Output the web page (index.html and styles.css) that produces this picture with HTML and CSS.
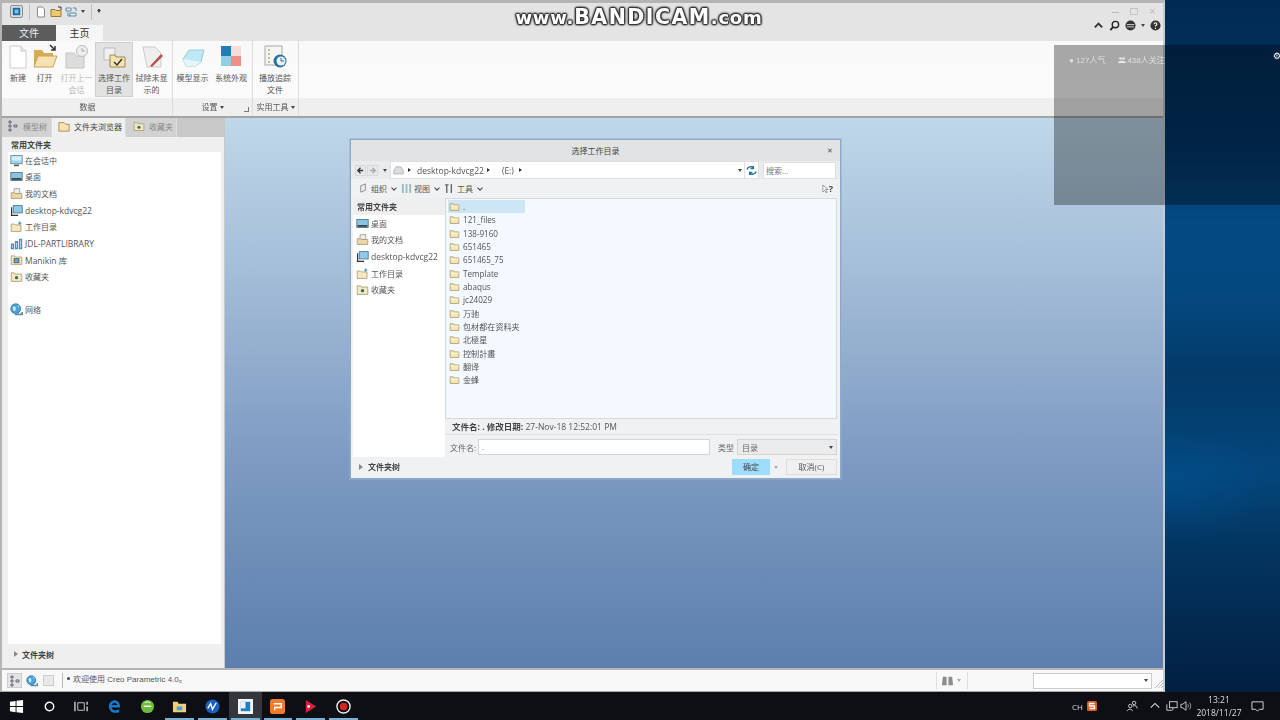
FILE: index.html
```html
<!DOCTYPE html>
<html lang="zh">
<head>
<meta charset="utf-8">
<title>Creo Parametric</title>
<link rel="stylesheet" href="styles.css">
</head>
<body>
<svg class="defs" width="0" height="0" aria-hidden="true">
  <symbol id="folder" viewBox="0 0 14 14"><path d="M1.500 3.500h4l1 1.500h6v7h-11z" fill="#f6e7b8" stroke="#a8966a"/><path d="M2 6.500h10.500" stroke="#fff6d8"/></symbol>
  <symbol id="monitor" viewBox="0 0 16 16"><rect x="1" y="2" width="14" height="10" fill="#a5d8ee" stroke="#5d8296"/><rect x="2" y="3" width="12" height="5" fill="#d2eef8"/><path d="M5 14h6" stroke="#555" stroke-width="2"/></symbol>
  <symbol id="desk" viewBox="0 0 16 16"><rect x="1" y="3" width="14" height="10" fill="#87c5e2" stroke="#4b6e84"/><rect x="2" y="10" width="12" height="2" fill="#333"/></symbol>
  <symbol id="docs" viewBox="0 0 16 16"><path d="M5 2h7v6H5z" fill="#eee" stroke="#999"/><path d="M1.500 7h4l1 1h8v6h-13z" fill="#ecd7a6" stroke="#a8966a"/></symbol>
  <symbol id="netpc" viewBox="0 0 16 16"><rect x="4" y="2" width="11" height="9" fill="#8ecbe8" stroke="#4b6e84"/><path d="M2 4v10M1 14h9" stroke="#333" stroke-width="1.500"/></symbol>
  <symbol id="work" viewBox="0 0 16 16"><path d="M1.500 5h4l1 1h7v8h-12z" fill="#f6e8c2" stroke="#a8966a"/><path d="M12 1l.8 2 2 .8-2 .8-.8 2-.8-2-2-.8 2-.8z" fill="#3d8ec0"/></symbol>
  <symbol id="lib" viewBox="0 0 16 16"><path d="M1 8h4v7H1zM6 5h4v10H6zM11 2h4v13h-4z" fill="#3f93c6"/><path d="M3 10v3M8 7v6M13 4v9" stroke="#cfe8f5"/></symbol>
  <symbol id="manikin" viewBox="0 0 16 16"><path d="M1.500 3.500h4l1 1.500h8v9h-13z" fill="#f6e8c2" stroke="#a8966a"/><rect x="5" y="7" width="6" height="5" fill="#6fa3c0" stroke="#2f5f7c"/></symbol>
  <symbol id="fav" viewBox="0 0 16 16"><path d="M1.500 3.500h4l1 1.500h8v9h-13z" fill="#f6e8c2" stroke="#a8966a"/><circle cx="8" cy="9.500" r="2" fill="#2f6d5f"/></symbol>
  <symbol id="globe" viewBox="0 0 16 16"><circle cx="7" cy="7" r="6" fill="#4ba3d8" stroke="#2a6f9f"/><path d="M3 5c3-2 5 0 4 3s-3 2-3 0M9 2c2 1 3 3 2 4" fill="#c9ecf7"/><path d="M6 14h9v-3" fill="none" stroke="#5b8cad" stroke-width="2"/></symbol>
</svg>

<div class="desktop">
  <div class="screen">
    <div class="app">
      <header class="titlebar">
        <div class="quick">
          <svg class="q-app" viewBox="0 0 14 14"><rect x=".5" y=".5" width="13" height="13" rx="2" fill="#d8dde0" stroke="#7a8188"/><rect x="3" y="3" width="8" height="8" fill="#1f6aa0"/><rect x="5" y="5" width="4" height="4" fill="#7ec4e8"/></svg>
          <span class="q-sep"></span>
          <svg class="q-ic" viewBox="0 0 12 12"><path d="M2.500 1h5l2 2v8h-7z" fill="#fff" stroke="#8a8a8a"/></svg>
          <svg class="q-ic" viewBox="0 0 12 12"><path d="M1 3.500h4l1 1h5v6H1z" fill="#ecc873" stroke="#9a7b35"/><path d="M8 1h3v3" fill="none" stroke="#333"/></svg>
          <svg class="q-ic" viewBox="0 0 12 12"><path d="M1 2h5v3H1zM5 7h6v3H5z" fill="#dfeef6" stroke="#5d8aa6"/><path d="M8 2h3v3M3 6v4h2" fill="none" stroke="#5d8aa6"/></svg>
          <span class="caret q-caret"></span>
          <span class="q-sep"></span>
          <span class="caret bar"></span>
        </div>
        <div class="win-controls">
          <div class="caption">
            <span class="cap-min"></span><span class="cap-max"></span><span class="cap-close">✕</span>
          </div>
          <div class="help-row">
            <svg class="h-ic" viewBox="0 0 12 12"><path d="M2 8l4-4 4 4" fill="none" stroke="#333" stroke-width="2"/></svg>
            <svg class="h-ic" viewBox="0 0 12 12"><circle cx="7" cy="5" r="3.500" fill="none" stroke="#222" stroke-width="1.500"/><path d="M4.500 7.500L1.500 11" stroke="#222" stroke-width="2"/></svg>
            <svg class="h-ic" viewBox="0 0 12 12"><circle cx="6" cy="6" r="5.500" fill="#333"/><path d="M2 5h8M2 7.500h8" stroke="#ddd"/></svg>
            <span class="caret"></span>
            <svg class="h-ic" viewBox="0 0 12 12"><circle cx="6" cy="6" r="5.500" fill="#333"/><path d="M4.500 4.500c0-2 3-2 3 0 0 1.300-1.500 1.200-1.500 2.700M6 8.500v1.200" fill="none" stroke="#fff" stroke-width="1.200"/></svg>
          </div>
        </div>
      </header>
      <nav class="tabs">
        <span class="tab-file">文件</span>
        <span class="tab-home">主页</span>
      </nav>
      <section class="ribbon">
        <div class="group g-data">
          <div class="tools">
            <div class="tool w28"><svg class="big" viewBox="0 0 26 26"><path d="M5 2h11l5 5v17H5z" fill="#fff" stroke="#c8ccd0"/><path d="M16 2v5h5" fill="#e4e8ea" stroke="#c8ccd0"/></svg><span>新建</span></div>
            <div class="tool w27"><svg class="big" viewBox="0 0 26 26"><path d="M2 6h8l2 3h9v4H6l-4 10z" fill="#d9ab55"/><path d="M6 12h19l-4 11H2z" fill="#f6e2b0" stroke="#caa35a"/><path d="M18 1l5 5M23 2v4h-4" fill="none" stroke="#333" stroke-width="1.500"/></svg><span>打开</span></div>
            <div class="tool w37 off"><svg class="big" viewBox="0 0 26 26"><path d="M2 9h8l2 3h8v12H2z" fill="#dcdcdc" stroke="#c4c4c4"/><circle cx="18" cy="7" r="5.500" fill="#eee" stroke="#bbb"/><path d="M18 4v3h3" fill="none" stroke="#aaa"/></svg><span>打开上一会话</span></div>
            <div class="tool w38 active"><svg class="big" viewBox="0 0 26 26"><path d="M3 4h11v12H3z" fill="#f0f0f0" stroke="#bbb"/><path d="M9 11h5l1 2h9v10H9z" fill="#f6e2b0" stroke="#a08850"/><path d="M13 18l3 3 5-6" fill="none" stroke="#333" stroke-width="1.500"/></svg><span>选择工作目录</span></div>
            <div class="tool w37"><svg class="big" viewBox="0 0 26 26"><path d="M4 3h12l6 6v14H8z" fill="#eee" stroke="#ccc"/><path d="M11 22l11-12 2 2-11 11z" fill="#b8524e"/></svg><span>拭除未显示的</span></div>
          </div>
          <div class="group-foot">数据</div>
        </div>
        <div class="group g-set">
          <div class="tools">
            <div class="tool w39"><svg class="big" viewBox="0 0 26 26"><path d="M3 15l6-9h15l-3 12-5 4H6z" fill="#bfe8f6" stroke="#9cc"/><path d="M3 15l3 7h10l5-4-5-1z" fill="#e4f6fb"/></svg><span>模型显示</span></div>
            <div class="tool w38"><svg class="big" viewBox="0 0 26 26"><rect x="3" y="2" width="10" height="10" fill="#1c7fb5"/><rect x="13" y="2" width="10" height="10" fill="#f8dcdc"/><rect x="3" y="12" width="10" height="10" fill="#8fd0e2"/><rect x="13" y="12" width="10" height="10" fill="#ec8f84"/></svg><span>系统外观</span></div>
          </div>
          <div class="group-foot">设置 <span class="caret"></span><span class="launcher"></span></div>
        </div>
        <div class="group g-util">
          <div class="tools">
            <div class="tool w44"><svg class="big" viewBox="0 0 26 26"><rect x="3" y="2" width="17" height="19" fill="#f4f4f0" stroke="#aaa"/><path d="M6 6h2M6 10h2M6 14h2M6 18h2" stroke="#8a8a50"/><circle cx="18" cy="17" r="6.500" fill="#2c6e9e"/><circle cx="19" cy="17" r="4.500" fill="#e9f2f7"/><path d="M19 14v3h3" fill="none" stroke="#2c6e9e"/></svg><span>播放追踪文件</span></div>
          </div>
          <div class="group-foot">实用工具 <span class="caret"></span></div>
        </div>
      </section>
      <main class="workspace">
        <aside class="nav">
          <div class="nav-tabs">
            <span class="nav-tab t-model"><svg class="ni" viewBox="0 0 12 12"><path d="M2 1h2v2H2zM2 5h2v2H2zM2 9h2v2H2zM7 5h3v2H7z" fill="none" stroke="#667"/></svg>模型树</span>
            <span class="nav-tab t-browser on"><svg class="ni" viewBox="0 0 14 14"><path d="M1 3h6l2 2h4v8H1z" fill="#f6e2b0" stroke="#a08850"/></svg>文件夹浏览器</span>
            <span class="nav-tab t-fav"><svg class="ni"><use href="#fav"/></svg>收藏夹</span>
          </div>
          <div class="nav-body">
            <div class="sec-head">常用文件夹</div>
            <ul class="places">
              <li><svg class="pi"><use href="#monitor"/></svg>在会话中</li>
              <li><svg class="pi"><use href="#desk"/></svg>桌面</li>
              <li><svg class="pi"><use href="#docs"/></svg>我的文档</li>
              <li class="latin"><svg class="pi"><use href="#netpc"/></svg>desktop-kdvcg22</li>
              <li><svg class="pi"><use href="#work"/></svg>工作目录</li>
              <li class="latin"><svg class="pi"><use href="#lib"/></svg>JDL-PARTLIBRARY</li>
              <li class="latin"><svg class="pi"><use href="#manikin"/></svg>Manikin 库</li>
              <li><svg class="pi"><use href="#fav"/></svg>收藏夹</li>
              <li class="spacer"></li>
              <li><svg class="pi"><use href="#globe"/></svg>网络</li>
            </ul>
            <div class="tree-foot"><span class="tri"></span>文件夹树</div>
          </div>
        </aside>
        <div class="graphics"></div>
      </main>
      <footer class="status">
        <div class="st-left">
          <span class="st-btn pressed"><svg viewBox="0 0 12 12"><path d="M2 1h2v2H2zM2 5h2v2H2zM2 9h2v2H2zM7 5h3v2H7z" fill="none" stroke="#667"/></svg></span>
          <span class="st-btn"><svg viewBox="0 0 14 14"><use href="#globe"/></svg></span>
          <span class="st-btn"><span class="st-box"></span></span>
          <span class="st-sep"></span>
          <span class="st-msg"><span class="dot"></span>欢迎使用 Creo Parametric 4.0。</span>
        </div>
        <div class="st-right">
          <span class="finder"><svg viewBox="0 0 14 14"><path d="M2 3h4v9H1zM8 3h4l1 9H8z" fill="#8c8c8c"/></svg><i class="caret"></i></span>
          <span class="filter"><i class="caret"></i></span>
          <svg class="grip" viewBox="0 0 8 8"><path d="M8 0L0 8M8 3L3 8M8 6L6 8" stroke="#bbb"/></svg>
        </div>
      </footer>
    </div>
    <div class="wallpaper"></div>
  </div>

  <div class="taskbar">
    <div class="task-left">
      <span class="tb"><svg viewBox="0 0 16 16"><path d="M1 3l6-1v5.500H1zM8 1.800L15 1v6.500H8zM1 8.500h6V14l-6-1zM8 8.500h7V15l-7-1z" fill="#fff"/></svg></span>
      <span class="tb"><svg viewBox="0 0 16 16"><circle cx="8" cy="8" r="4.500" fill="none" stroke="#fff" stroke-width="1.500"/></svg></span>
      <span class="tb"><svg viewBox="0 0 16 16"><path d="M4 4h7v8H4z" fill="none" stroke="#ccc"/><path d="M1 3v10M14 3v3M14 8v5" stroke="#ccc" stroke-width="1.500"/></svg></span>
      <span class="tb"><svg viewBox="0 0 16 16"><path d="M14 9H5c.2 3 4.500 4 8 2v3c-5 2-11 0-11-6 0-6 6-8 9-6 2 1 3 4 3 7zM5 6.500h6c0-3-5.500-3-6 0z" fill="#1679c9"/></svg></span>
      <span class="tb"><svg viewBox="0 0 16 16"><circle cx="8" cy="8" r="7" fill="#6cbb3c"/><path d="M4 7h8v1.500H4z" fill="#fff"/><path d="M5 4a5 5 0 016 0" fill="none" stroke="#fff"/></svg></span>
      <span class="tb run"><svg viewBox="0 0 16 16"><path d="M1 3h5l1 2h8v9H1z" fill="#f0cf78"/><rect x="5" y="8" width="6" height="4" fill="#4aa3cf"/></svg></span>
      <span class="tb run"><svg viewBox="0 0 16 16"><circle cx="8" cy="8" r="7.500" fill="#1b5fc0"/><path d="M3 10l3-5 2 6 4-7" fill="none" stroke="#fff" stroke-width="1.500"/></svg></span>
      <span class="tb run active"><svg viewBox="0 0 16 16"><rect x="0" y="0" width="16" height="16" fill="#f4f4f4"/><rect x="3" y="3" width="10" height="10" fill="#1f7fc0"/><rect x="3" y="3" width="5" height="7" fill="#e8f2f8"/></svg></span>
      <span class="tb run"><svg viewBox="0 0 16 16"><rect width="16" height="16" rx="3" fill="#ee7c2c"/><path d="M4 5h8v4H5v3" fill="none" stroke="#fff" stroke-width="1.500"/></svg></span>
      <span class="tb run"><svg viewBox="0 0 16 16"><path d="M3 1l11 7-11 7z" fill="#d9203f"/><circle cx="6" cy="8" r="1.500" fill="#fff"/></svg></span>
      <span class="tb run"><svg viewBox="0 0 16 16"><circle cx="8" cy="8" r="7" fill="none" stroke="#eee" stroke-width="1.500"/><circle cx="8" cy="8" r="4" fill="#e02020"/></svg></span>
    </div>
    <div class="tray">
      <span class="t-ch">CH</span>
      <svg class="t-s" viewBox="0 0 12 12"><rect x="1" y="1" width="10" height="10" rx="1.500" fill="#dd5a22"/><path d="M8.500 3.500h-5v2.500h5v2.500h-5" fill="none" stroke="#fff" stroke-width="1.300"/></svg>
      <svg class="t-ic people" viewBox="0 0 14 14"><circle cx="5" cy="7" r="2" fill="none" stroke="#ddd"/><circle cx="9.500" cy="3.500" r="2" fill="none" stroke="#ddd"/><path d="M1.500 13c0-3 6-3 6 0M8 7c3-1 5 0 5 3" fill="none" stroke="#ddd"/></svg>
      <svg class="t-ic up" viewBox="0 0 14 14"><path d="M2 9l5-5 5 5" fill="none" stroke="#ddd" stroke-width="1.200"/></svg>
      <svg class="t-ic net" viewBox="0 0 14 14"><rect x="4" y="2" width="9" height="7" fill="none" stroke="#ddd"/><path d="M1 5v7h6M8 9v3" fill="none" stroke="#ddd"/></svg>
      <svg class="t-ic snd" viewBox="0 0 14 14"><path d="M1 5h2l4-3v10l-4-3H1z" fill="none" stroke="#ddd"/><path d="M9 5c1 1 1 3 0 4M11 3c2 2 2 6 0 8" fill="none" stroke="#aaa"/></svg>
      <div class="clock"><span>13:21</span><span>2018/11/27</span></div>
      <svg class="t-note" viewBox="0 0 14 14"><path d="M1 2h12v8H9l-2 2-2-2H1z" fill="none" stroke="#ddd"/></svg>
    </div>
  </div>

  <section class="dialog">
    <div class="dlg-title"><span>选择工作目录</span><span class="dlg-x">✕</span></div>
    <div class="dlg-addr">
      <span class="arrow-btn"><svg viewBox="0 0 10 10"><path d="M8 5H3M5 2L2 5l3 3" fill="none" stroke="#333" stroke-width="1.500"/></svg></span>
      <span class="arrow-btn dim"><svg viewBox="0 0 10 10"><path d="M2 5h5M5 2l3 3-3 3" fill="none" stroke="#aaa" stroke-width="1.500"/></svg></span>
      <span class="caret"></span>
      <div class="addr-field">
        <svg class="drive" viewBox="0 0 14 12"><path d="M1 7l3-5h6l3 5v4H1z" fill="#ddd" stroke="#aaa"/></svg>
        <span class="crumb-tri"></span><span class="crumb">desktop-kdvcg22</span>
        <span class="crumb-tri"></span><span class="crumb gap">(E:)</span>
        <span class="crumb-tri"></span>
        <span class="caret end"></span>
      </div>
      <span class="refresh"><svg viewBox="0 0 12 12"><path d="M1 5c1-3 5-4 7-2M8 1v3H5M11 7c-1 3-5 4-7 2M4 11V8h3" fill="none" stroke="#1f6f96" stroke-width="1.500"/></svg></span>
      <span class="search">搜索...</span>
    </div>
    <div class="dlg-tools">
      <span class="dt"><svg viewBox="0 0 12 12"><path d="M3 10V3l5-2v7z" fill="#eee" stroke="#888"/></svg>组织<i class="chev"></i></span>
      <span class="dt"><svg viewBox="0 0 12 12"><path d="M1 1h2v10H1zM5 1h2v10H5zM9 1h2v10H9z" fill="#9bb"/></svg>视图<i class="chev"></i></span>
      <span class="dt"><svg viewBox="0 0 12 12"><path d="M1 2h4M3 2v9M8 1v10" stroke="#666" stroke-width="1.500"/></svg>工具<i class="chev"></i></span>
      <span class="what">
        <svg viewBox="0 0 8 11"><path d="M1 1v8l2-2 2 3 1-1-2-3h3z" fill="#fff" stroke="#666" stroke-width=".7"/></svg>?
      </span>
    </div>
    <div class="dlg-main">
      <div class="dlg-side">
        <div class="sec-head side">常用文件夹</div>
        <ul class="places in-dlg">
          <li><svg class="pi"><use href="#desk"/></svg>桌面</li>
          <li><svg class="pi"><use href="#docs"/></svg>我的文档</li>
          <li class="latin"><svg class="pi"><use href="#netpc"/></svg>desktop-kdvcg22</li>
          <li><svg class="pi"><use href="#work"/></svg>工作目录</li>
          <li><svg class="pi"><use href="#fav"/></svg>收藏夹</li>
        </ul>
      </div>
      <div class="dlg-right">
        <ul class="files">
          <li class="sel"><svg class="fi"><use href="#folder"/></svg>.</li>
          <li><svg class="fi"><use href="#folder"/></svg>121_files</li>
          <li><svg class="fi"><use href="#folder"/></svg>138-9160</li>
          <li><svg class="fi"><use href="#folder"/></svg>651465</li>
          <li><svg class="fi"><use href="#folder"/></svg>651465_75</li>
          <li><svg class="fi"><use href="#folder"/></svg>Template</li>
          <li><svg class="fi"><use href="#folder"/></svg>abaqus</li>
          <li><svg class="fi"><use href="#folder"/></svg>jc24029</li>
          <li><svg class="fi"><use href="#folder"/></svg>万驰</li>
          <li><svg class="fi"><use href="#folder"/></svg>包材都在资料夹</li>
          <li><svg class="fi"><use href="#folder"/></svg>北極星</li>
          <li><svg class="fi"><use href="#folder"/></svg>控制計畫</li>
          <li><svg class="fi"><use href="#folder"/></svg>翻译</li>
          <li><svg class="fi"><use href="#folder"/></svg>金蜂</li>
        </ul>
        <div class="file-info"><b>文件名: .</b> <b class="m">修改日期:</b> 27-Nov-18 12:52:01 PM</div>
        <div class="file-name">
          <label>文件名:</label>
          <span class="name-input">.</span>
          <label class="type-l">类型</label>
          <span class="type-sel"><span>目录</span><i class="caret"></i></span>
        </div>
      </div>
    </div>
    <div class="dlg-foot">
      <div class="tree-foot in-dlg-foot"><span class="tri"></span>文件夹树</div>
      <div class="dlg-btns">
        <span class="ok">确定</span><span class="ok-drop"><i class="caret"></i></span>
        <span class="cancel">取消(C)</span>
      </div>
    </div>
  </section>

  <div class="watermark"><span class="s">www.</span>BANDICAM<span class="s">.com</span></div>

  <div class="shade">
    <div class="stats">
      <span>● 127人气</span>
      <span class="fans"><svg class="fans-ic" viewBox="0 0 8 6"><circle cx="2.500" cy="1.500" r="1.300" fill="#e8e8e8"/><circle cx="5.500" cy="1.500" r="1.300" fill="#e8e8e8"/><path d="M0 6c0-3 8-3 8 0z" fill="#e8e8e8"/></svg>438人关注</span>
    </div>
    <span class="gear">⚙</span>
  </div>
</div>
</body>
</html>
```
FILE: styles.css
```css
* { box-sizing: border-box; }
html, body { margin: 0; padding: 0; width: 1280px; height: 720px; overflow: hidden; }
body { font-family: "Open Sans", "Noto Sans CJK SC", sans-serif; font-size: 8px; color: #555; background: #001a38; }
ul { list-style: none; margin: 0; padding: 0; }
.defs { position: absolute; }
i { font-style: normal; }

.desktop { position: relative; width: 1280px; height: 720px; display: flex; flex-direction: column; filter: blur(.45px); overflow: hidden; }
.screen { height: 692px; display: flex; }
.app { width: 1165px; height: 692px; display: flex; flex-direction: column; background: #e4e4e4; border-top: 3px solid #b4b4b4; border-left: 2px solid #b4b4b4; border-right: 2px solid #c4ccd4; border-bottom: 1px solid #a8a8a8; }
.wallpaper { flex: 1; background: radial-gradient(ellipse 90px 55px at 10% 70%, rgba(0,88,155,.4), rgba(0,88,155,0)), linear-gradient(#012a52 0, #02386a 22%, #054a84 32%, #04487f 43%, #033a68 54%, #04467c 68%, #033763 78%, #021f40 100%); }

.caret { display: inline-block; width: 0; height: 0; border-left: 2.5px solid transparent; border-right: 2.5px solid transparent; border-top: 3px solid #444; vertical-align: middle; }
.caret.bar { box-shadow: 0 -2px 0 -1px #444; }

.titlebar { height: 22px; display: flex; justify-content: space-between; }
.quick { display: flex; align-items: center; padding-left: 8px; padding-bottom: 5px; }
.q-app { width: 13px; height: 13px; }
.q-sep { width: 1px; height: 16px; background: #c0c0c0; margin: 0 5px 0 6px; }
.q-ic { width: 12px; height: 12px; margin-right: 3px; }
.q-caret { margin-left: 1px; }
.win-controls { width: 80px; display: flex; flex-direction: column; align-items: flex-end; padding-right: 2px; }
.caption { height: 11px; display: flex; gap: 11px; align-items: center; padding: 5px 5px 0 0; color: #b8b8b8; }
.cap-min { width: 7px; height: 1px; background: #b8b8b8; margin-top: 3px; }
.cap-max { width: 8px; height: 7px; border: 1px solid #c4c4c4; }
.cap-close { font-size: 8px; line-height: 8px; }
.help-row { margin-top: 6px; display: flex; align-items: center; gap: 5px; }
.h-ic { width: 11px; height: 11px; }

.tabs { height: 16px; display: flex; font-size: 10px; line-height: 16px; }
.tab-file { width: 54px; background: #5c5c5c; color: #eee; text-align: center; }
.tab-home { width: 47px; background: #f6f6f6; color: #333; text-align: center; }

.ribbon { height: 75px; display: flex; background: linear-gradient(#f9f9f9 0, #fbfbfb 57px, #efefef 57px); }
.group { display: flex; flex-direction: column; border-right: 1px solid #dcdcdc; }
.g-data { width: 171px; padding-left: 1px; }
.g-set { width: 80px; }
.g-util { width: 46px; }
.tools { height: 56px; display: flex; padding-top: 1px; }
.tool { display: flex; flex-direction: column; align-items: center; text-align: center; line-height: 11.500px; color: #555; padding: 2px 3px 0; height: 55px; }
.tool span { display: block; margin-top: 2px; width: 34px; }
.w28 { width: 28px; padding-left: 5px; } .w27 { width: 27px; } .w37 { width: 37px; } .w38 { width: 38px; } .w39 { width: 39px; } .w44 { width: 44px; }
.w28 span, .w27 span { width: 20px; }
.big { width: 26px; height: 26px; flex: none; }
.tool.off { color: #bbb; }
.tool.active { background: #e2e2e2; border: 1px solid #cfcfcf; padding-top: 1px; }
.group-foot { flex: 1; text-align: center; line-height: 19px; position: relative; color: #555; }
.launcher { position: absolute; right: 3px; bottom: 4px; width: 5px; height: 5px; border-right: 1px solid #777; border-bottom: 1px solid #777; }

.workspace { flex: 1; display: flex; border-top: 2px solid #a4a4a4; min-height: 0; }
.nav { width: 223px; display: flex; flex-direction: column; border-right: 1px solid #c8c8c8; background: #efefef; }
.nav-tabs { height: 19px; display: flex; background: #c8c8c8; }
.nav-tab { display: flex; align-items: center; gap: 4px; color: #888; padding-left: 5px; padding-bottom: 3px; border-right: 1px solid #ddd; background: #d2d2d2; }
.nav-tab.on { background: #f0f0f0; color: #444; }
.t-model { width: 50px; } .t-browser { width: 74px; padding-left: 6px; } .t-fav { width: 51px; padding-left: 7px; }
.ni { width: 12px; height: 12px; flex: none; }
.nav-body { flex: 1; display: flex; flex-direction: column; padding-left: 6px; padding-right: 3px; min-height: 0; }
.sec-head { height: 15px; line-height: 16px; font-weight: 700; color: #444; padding-left: 3px; }
.sec-head.side { height: 17px; padding-left: 4px; line-height: 18px; background: #efefef; }
.places { background: #fff; flex: 1; }
.places li { height: 16.600px; display: flex; align-items: center; gap: 2px; padding-left: 2px; color: #555; }
.places .latin { font-size: 8.500px; }
.pi { width: 13px; height: 13px; flex: none; }
.tree-foot { height: 24px; display: flex; align-items: center; font-weight: 700; color: #444; gap: 4px; padding-left: 6px; padding-bottom: 4px; }
.tri { width: 0; height: 0; border-top: 3px solid transparent; border-bottom: 3px solid transparent; border-left: 4px solid #888; }
.graphics { flex: 1; background: linear-gradient(#bed7e9 0, #a7c0da 25%, #7f9cc3 60%, #5c7fad 100%); }

.status { height: 23px; display: flex; justify-content: space-between; background: #f8f8f8; border-top: 2px solid #b4b4b4; }
.st-left { display: flex; align-items: center; padding-left: 5px; }
.st-btn { width: 15px; height: 15px; margin-right: 2px; display: flex; align-items: center; justify-content: center; }
.st-btn svg { width: 12px; height: 12px; }
.st-btn.pressed { background: #e4e4e4; border: 1px solid #ccc; }
.st-box { width: 11px; height: 11px; background: #e8e8e8; border: 1px solid #ccc; }
.st-sep { width: 1px; height: 15px; background: #bbb; margin: 0 4px; }
.st-msg { display: flex; align-items: center; gap: 3px; font-family: "Liberation Sans", "Noto Sans CJK SC", sans-serif; font-size: 8px; color: #555; padding-bottom: 4px; }
.dot { width: 3px; height: 3px; border-radius: 50%; background: #1f4f7a; }
.st-right { display: flex; align-items: center; }
.finder { width: 32px; height: 17px; display: flex; align-items: center; gap: 3px; padding-left: 4px; border-left: 1px solid #ddd; border-right: 1px solid #ddd; margin-right: 65px; }
.finder svg { width: 13px; height: 13px; }
.finder .caret { border-top-color: #aaa; }
.filter { width: 119px; height: 16px; background: #fff; border: 1px solid #ccc; display: flex; align-items: center; justify-content: flex-end; padding-right: 3px; }
.grip { width: 8px; height: 8px; margin: 6px 0 0 3px; }

.taskbar { height: 28px; display: flex; justify-content: space-between; background: #0e0f14; color: #ddd; }
.task-left { display: flex; }
.tb { width: 32.700px; height: 28px; display: flex; align-items: center; justify-content: center; position: relative; }
.tb svg { width: 15px; height: 15px; }
.tb.run::after { content: ""; position: absolute; left: 2px; right: 2px; bottom: 0; height: 2px; background: #7ab0d4; }
.tb.active { background: #33363c; }
.tray { display: flex; align-items: center; width: 215px; }
.t-ch { font-size: 8px; color: #ddd; margin-left: 7px; }
.t-s { width: 12px; height: 12px; margin-left: 3px; }
.t-ic { width: 12px; height: 12px; }
.people { margin-left: 28px; } .up { margin-left: 11px; } .net { margin-left: 5px; } .snd { margin-left: 2px; }
.clock { display: flex; flex-direction: column; align-items: center; line-height: 12.500px; font-size: 8.500px; color: #ddd; margin-left: 2px; width: 50px; padding-top: 1px; }
.t-note { width: 13px; height: 13px; margin-left: 7px; }

.dialog { position: absolute; left: 350px; top: 139px; width: 491px; height: 340px; background: #eff1f3; border: 1px solid #8ea9c7; display: flex; flex-direction: column; box-shadow: 0 0 0 1px rgba(150,175,205,.5); }
.dlg-title { height: 21px; background: #e2e3e4; text-align: center; line-height: 21px; color: #444; position: relative; }
.dlg-x { position: absolute; right: 7px; top: 0; font-size: 7px; color: #555; }
.dlg-addr { height: 18px; display: flex; align-items: center; background: #eaebec; padding-left: 4px; }
.arrow-btn { width: 11px; height: 11px; margin-right: 1px; background: #e8e8e8; border: 1px solid #d8d8d8; display: flex; align-items: center; justify-content: center; }
.arrow-btn svg { width: 9px; height: 9px; }
.dlg-addr > .caret { margin: 0 3px 0 4px; }
.addr-field { width: 355px; height: 18px; background: #fff; border: 1px solid #e0e0e0; display: flex; align-items: center; padding-left: 2px; font-size: 8.500px; color: #555; }
.drive { width: 11px; height: 10px; margin-right: 4px; }
.crumb-tri { width: 0; height: 0; border-top: 2.500px solid transparent; border-bottom: 2.500px solid transparent; border-left: 3px solid #333; margin-right: 6px; }
.crumb { margin-right: 3px; }
.crumb.gap { margin-left: 6px; margin-right: 5px; }
.caret.end { margin-left: auto; margin-right: 2px; }
.refresh { width: 14px; height: 18px; background: #fff; border: 1px solid #e0e0e0; border-left: 0; display: flex; align-items: center; justify-content: center; }
.refresh svg { width: 11px; height: 11px; }
.search { width: 73px; height: 17px; margin-left: 4px; background: #fff; border: 1px solid #e0e0e0; line-height: 15px; padding-left: 2px; color: #777; }
.dlg-tools { height: 19px; display: flex; align-items: center; padding-left: 7px; background: #eff1f3; color: #555; }
.dt { display: flex; align-items: center; gap: 2px; margin-right: 4px; }
.dt svg { width: 11px; height: 11px; }
.chev { width: 4px; height: 4px; border-right: 1px solid #444; border-bottom: 1px solid #444; transform: rotate(45deg); margin: -2px 1px 0 3px; }
.what { margin-left: auto; margin-right: 7px; display: flex; align-items: center; font-size: 9px; font-weight: 700; color: #444; }
.what svg { width: 7px; height: 10px; }
.dlg-main { height: 259px; display: flex; }
.dlg-side { width: 92px; margin-left: 2px; display: flex; flex-direction: column; }
.places.in-dlg li { padding-left: 3px; gap: 2px; }
.dlg-right { width: 392px; display: flex; flex-direction: column; }
.files { height: 221px; background: #f3f9fe; border: 1px solid #d8d8d8; padding: 1px 0 0 2px; }
.files li { height: 13.330px; width: 77px; display: flex; align-items: center; gap: 3px; font-size: 8.100px; color: #555; padding-left: 1px; white-space: nowrap; }
.files li.sel { background: #cde6f6; }
.fi { width: 11px; height: 11px; flex: none; }
.file-info { height: 16px; line-height: 16px; padding-left: 7px; font-size: 8.500px; border-bottom: 1px solid #e0e0e0; white-space: pre; }
.file-info b { color: #444; }
.file-name { height: 20px; margin-top: 2px; display: flex; align-items: center; padding-left: 5px; color: #666; }
.name-input { width: 232px; height: 16px; margin-left: 2px; background: #fff; border: 1px solid #d4d4d4; padding-left: 3px; line-height: 13px; }
.type-l { margin-left: 8px; width: 19px; }
.type-sel { width: 100px; height: 16px; background: #ebebeb; border: 1px solid #d4d4d4; display: flex; align-items: center; justify-content: space-between; padding: 0 3px 0 4px; }
.dlg-foot { flex: 1; display: flex; justify-content: space-between; align-items: flex-start; }
.in-dlg-foot { height: 21px; padding-left: 8px; padding-bottom: 2px; gap: 5px; }
.dlg-btns { display: flex; align-items: center; padding: 2px 3px 0 0; }
.ok { width: 38px; height: 16px; line-height: 16px; background: #9edcfb; text-align: center; color: #444; }
.ok-drop { width: 12px; height: 16px; display: flex; align-items: center; justify-content: center; background: #eff1f3; }
.ok-drop .caret { border-top-color: #aaa; }
.cancel { width: 51px; height: 16px; margin-left: 4px; line-height: 14px; text-align: center; background: #f0f0f0; border: 1px solid #ddd; color: #555; }

.watermark { position: absolute; left: 509px; top: 3px; width: 260px; text-align: center; white-space: nowrap; font-family: "DejaVu Sans", sans-serif; font-weight: 700; font-size: 20.500px; line-height: 28px; color: #fff; letter-spacing: 1.500px; text-shadow: 1px 0 1px #333, -1px 0 1px #333, 0 1px 1px #333, 0 -1px 1px #333, 1px 1px 2px #444, -1px -1px 2px #444, 1px -1px 2px #444, -1px 1px 2px #444; }
.watermark .s { font-size: 18px; letter-spacing: .8px; }

.shade { position: absolute; left: 1054px; top: 45px; width: 226px; height: 160px; background: rgba(0,0,0,.33); color: #e0e0e0; }
.stats { width: 111px; display: flex; gap: 13px; padding: 9px 0 0 15px; white-space: nowrap; font-size: 8px; color: #ddd; font-family: "Liberation Sans", "Noto Sans CJK SC", sans-serif; }
.fans { display: flex; align-items: center; gap: 1px; }
.fans-ic { width: 8px; height: 6px; }
.gear { position: absolute; left: 219px; top: 6px; font-size: 9px; color: #fff; font-family: "DejaVu Sans", sans-serif; }
```
